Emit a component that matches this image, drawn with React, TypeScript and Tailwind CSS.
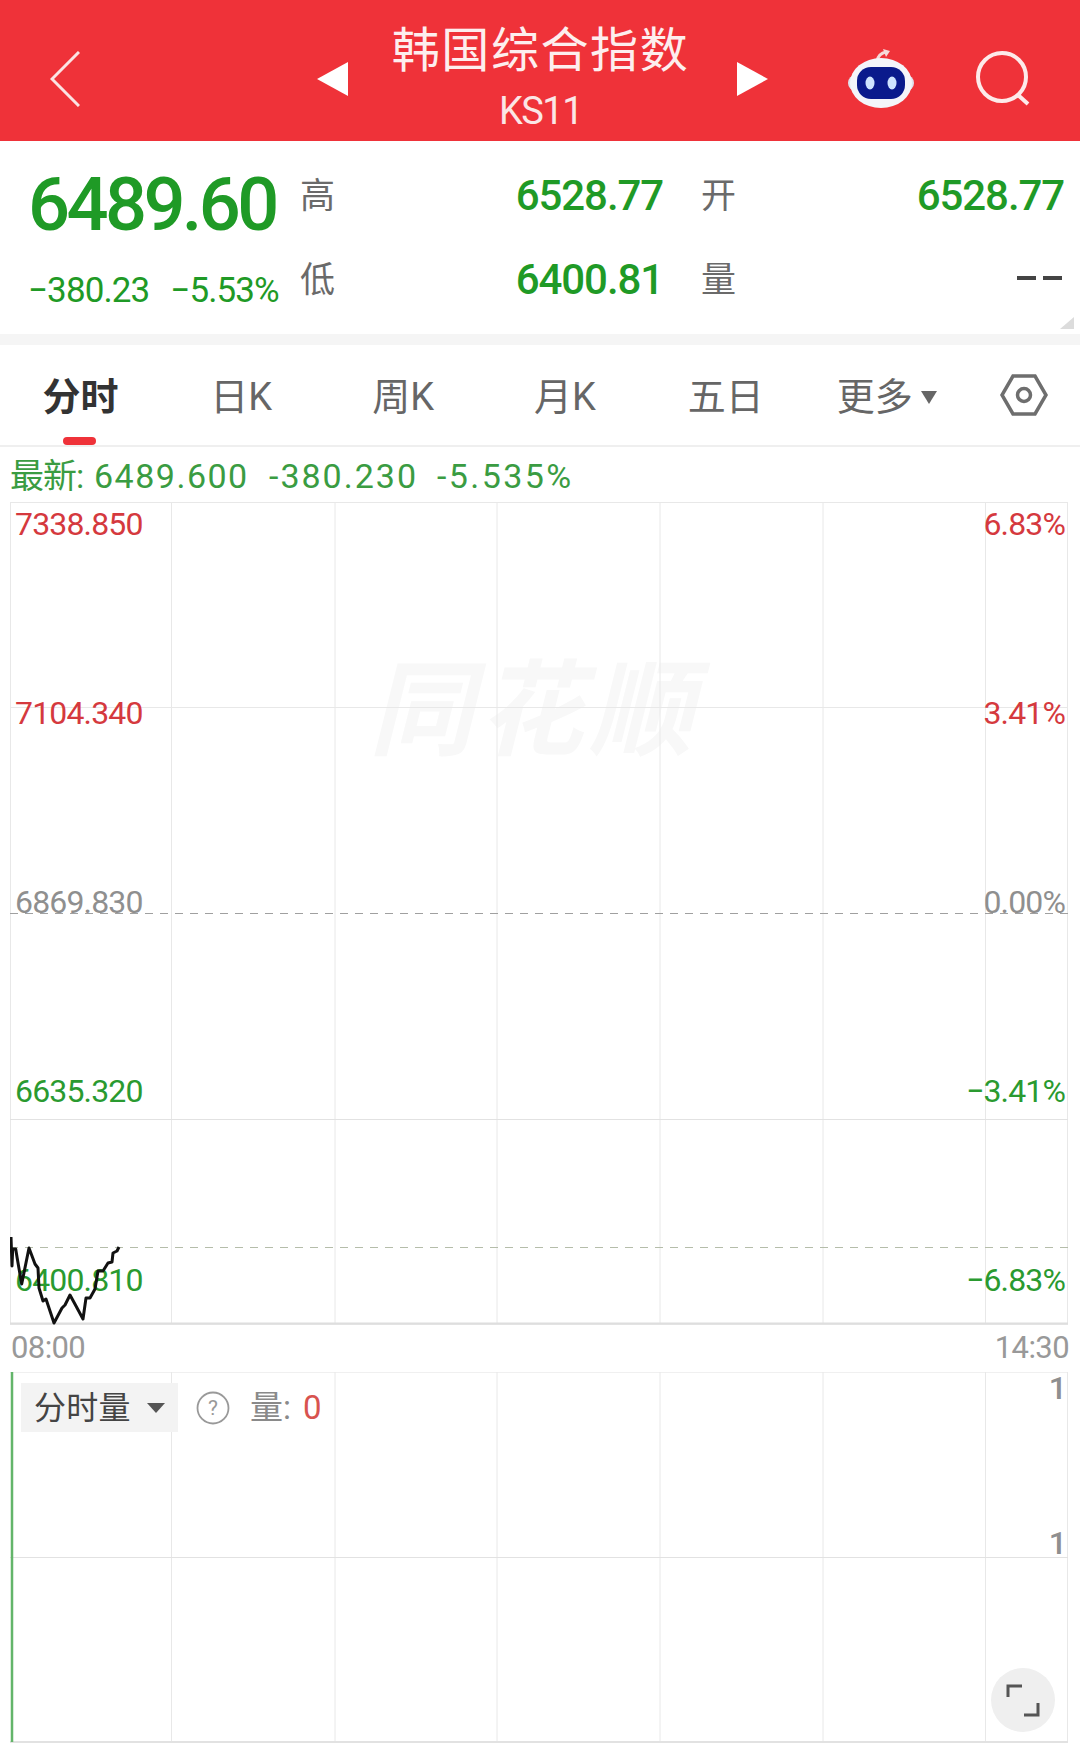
import React from "react";

const GREEN = "text-[#1f9a26]";

const tabs = [
  { label: "日K", width: "w-[161px]" },
  { label: "周K", width: "w-[163px]" },
  { label: "月K", width: "w-[161px]" },
  { label: "五日", width: "w-[161px]" },
];

const priceRows = [
  { left: "7338.850", right: "6.83%", color: "text-[#d5393e]" },
  { left: "7104.340", right: "3.41%", color: "text-[#d5393e]" },
  { left: "6869.830", right: "0.00%", color: "text-[#8f8f8f]" },
  { left: "6635.320", right: "−3.41%", color: "text-[#2a9a30]" },
  { left: "6400.810", right: "−6.83%", color: "text-[#2a9a30]" },
];

const gridX = [161.5, 325, 487, 650, 813, 975.5];

const linePoints =
  "1,64 2,93 2.7,76 5.7,76 7,84 11.7,111 19,75 25,91 28,95 29,115 33,128 36,126 44,150 52,135 55,132 60,122 66,133 73,146 76,125 80,125 85,116 88,98 93,98 98,90 102,89 103,80 107,78 109,74";

function PriceChart() {
  return (
    <svg className="absolute inset-0" width="1060" height="823" fill="none">
      <rect x="0.5" y="0.5" width="1057" height="822" stroke="#e8e8e8" />
      {gridX.map((x) => (
        <line key={x} x1={x} x2={x} y1="0" y2="822" stroke="#e8e8e8" />
      ))}
      <line x1="0" x2="1058" y1="205.5" y2="205.5" stroke="#e8e8e8" />
      <line x1="0" x2="1058" y1="617.5" y2="617.5" stroke="#e2e2e2" />
      <line x1="0" x2="1058" y1="411.5" y2="411.5" stroke="#a0a0a0" strokeDasharray="8 7" />
      <line x1="0" x2="1058" y1="745.5" y2="745.5" stroke="#b5bdaa" strokeDasharray="8 7" />
      <line x1="0" x2="1058" y1="821.5" y2="821.5" stroke="#dedede" strokeWidth="2" />
    </svg>
  );
}

function VolumeChart() {
  return (
    <svg className="absolute inset-0" width="1060" height="371" fill="none">
      <line x1="0" x2="1058" y1="0.5" y2="0.5" stroke="#f0f0f0" />
      <line x1="1057.5" x2="1057.5" y1="0" y2="370" stroke="#e8e8e8" />
      {gridX.map((x) => (
        <line key={x} x1={x} x2={x} y1="0" y2="370" stroke="#e8e8e8" />
      ))}
      <line x1="0" x2="1058" y1="185.5" y2="185.5" stroke="#e2e2e2" />
      <line x1="0" x2="1058" y1="370" y2="370" stroke="#e2e2e2" strokeWidth="2" />
      <line x1="2" x2="2" y1="0" y2="370" stroke="#63b56a" strokeWidth="2.5" />
    </svg>
  );
}

export default function App() {
  return (
    <div className="w-[1080px] h-[1757px] overflow-hidden bg-white font-['Roboto','Noto_Sans_CJK_SC',sans-serif]">
      {/* title bar */}
      <header className="flex items-center h-[141px] bg-[#ef3239] text-white">
        <svg className="ml-[50px] mt-[16px] shrink-0" width="30" height="56" viewBox="0 0 30 56" fill="none">
          <path d="M29 1 2 28l27 27" stroke="#fbe3e3" strokeWidth="3" />
        </svg>
        <svg className="ml-[237px] mt-[16px] shrink-0" width="31" height="34" viewBox="0 0 31 34">
          <path d="M31 0v34L0 17z" fill="#fff" />
        </svg>
        <div className="w-[389px] pr-[4px] text-center shrink-0">
          <div className="text-[48px] leading-[60px] mt-[12px] tracking-[1.6px] text-[#fdeeee]">韩国综合指数</div>
          <div className="text-[38px] leading-[44px] mt-[8px] tracking-[-1.5px] text-[#fbe6e6]">KS11</div>
        </div>
        <svg className="mt-[16px] shrink-0" width="31" height="34" viewBox="0 0 31 34">
          <path d="M0 0v34l31-17z" fill="#fff" />
        </svg>
        <svg className="ml-[79px] mt-[14px] shrink-0" width="68" height="60" viewBox="0 0 68 60" fill="none">
          <path d="M30 13c1-5 4-8 9-9" stroke="#f5d9d9" strokeWidth="3" />
          <path d="M36 1l7 2-4 6z" fill="#f5d9d9" />
          <rect x="1" y="27" width="66" height="16" rx="8" fill="#dfe3ee" />
          <ellipse cx="34" cy="35" rx="31" ry="25" fill="#f4f5fa" />
          <rect x="10" y="19" width="48" height="32" rx="14" fill="#0a1a8c" />
          <ellipse cx="23" cy="35" rx="4.5" ry="6.5" fill="#cfe4ff" />
          <ellipse cx="45" cy="35" rx="4.5" ry="6.5" fill="#cfe4ff" />
        </svg>
        <svg className="ml-[60px] mt-[16px] shrink-0" width="56" height="56" viewBox="0 0 56 56" fill="none">
          <circle cx="27" cy="26" r="24" stroke="#fdeaea" strokeWidth="4" />
          <path d="M43 44l10 9" stroke="#fdeaea" strokeWidth="4" />
        </svg>
      </header>

      {/* quote */}
      <section className="relative flex h-[193px]">
        <div className="w-[300px] pl-[28px] shrink-0">
          <div className={`text-[74px] leading-[80px] mt-[24px] font-medium tracking-[-3.6px] ${GREEN}`}>6489.60</div>
          <div className={`flex gap-[21px] text-[35px] leading-[40px] mt-[26px] tracking-[-0.9px] whitespace-nowrap ${GREEN}`}>
            <span>−380.23</span>
            <span>−5.53%</span>
          </div>
        </div>
        <div className="w-[766px] shrink-0 pt-[12px] text-[#6a6a6a]">
          <div className="flex h-[84px] items-center">
            <span className="text-[35px] w-[39px] shrink-0 pt-[4px]">高</span>
            <span className={`text-[42px] font-medium w-[324px] shrink-0 text-right tracking-[-1.1px] ${GREEN}`}>6528.77</span>
            <span className="text-[35px] ml-[38px] w-[40px] shrink-0 pt-[4px]">开</span>
            <span className={`text-[42px] font-medium w-[323px] shrink-0 text-right tracking-[-1.1px] ${GREEN}`}>6528.77</span>
          </div>
          <div className="flex h-[84px] items-center">
            <span className="text-[35px] w-[39px] shrink-0 pt-[4px]">低</span>
            <span className={`text-[42px] font-medium w-[324px] shrink-0 text-right tracking-[-1.1px] ${GREEN}`}>6400.81</span>
            <span className="text-[35px] ml-[38px] w-[40px] shrink-0 pt-[4px]">量</span>
            <span className="flex w-[321px] shrink-0 justify-end gap-[7px] pb-[2px]">
              <span className="w-[19px] h-[4px] bg-[#444]" />
              <span className="w-[19px] h-[4px] bg-[#444]" />
            </span>
          </div>
        </div>
        <svg className="absolute right-[6px] bottom-[5px]" width="14" height="12" viewBox="0 0 14 12">
          <path d="M14 0v12H0z" fill="#dcdcdc" />
        </svg>
      </section>
      <div className="h-[11px] bg-[#f5f5f5]" />

      {/* period tabs */}
      <nav className="relative flex h-[102px] border-b-[2px] border-[#efefef] items-center text-[38px] text-[#666] pt-[5px]">
        <div className="w-[161px] text-center font-bold text-[#333]">分时</div>
        {tabs.map((t) => (
          <div key={t.label} className={`${t.width} text-center`}>
            {t.label}
          </div>
        ))}
        <div className="flex w-[161px] justify-center items-center gap-[8px]">
          <span>更多</span>
          <svg width="16" height="13" viewBox="0 0 16 13">
            <path d="M0 0h16L8 13z" fill="#666" />
          </svg>
        </div>
        <div className="flex w-[113px] justify-center pb-[5px]">
          <svg width="48" height="42" viewBox="0 0 48 42" fill="none">
            <path d="M13 2h22l11 19-11 19H13L2 21z" stroke="#6e6e6e" strokeWidth="3.5" />
            <circle cx="24" cy="21" r="6.5" stroke="#6e6e6e" strokeWidth="3.5" />
          </svg>
        </div>
        <span className="absolute left-[63px] bottom-[0px] w-[33px] h-[8px] rounded-[4px] bg-[#ef3239]" />
      </nav>

      {/* latest line */}
      <div className="flex h-[55px] items-center pl-[10px] pt-[4px] text-[34px] text-[#3a9c42]">
        <span className="w-[84px] tracking-[-1px] whitespace-nowrap">最新:</span>
        <span className="w-[175px] tracking-[1.5px]">6489.600</span>
        <span className="w-[168px] tracking-[2px]">-380.230</span>
        <span className="tracking-[2.4px]">-5.535%</span>
      </div>

      {/* price chart */}
      <div className="relative ml-[10px] w-[1060px] h-[823px]">
        <div className="absolute left-[133px] top-[135px] w-[340px] text-[104px] leading-[130px] font-bold italic tracking-[6px] text-[#f8f8f8] whitespace-nowrap font-['Noto_Sans_CJK_SC',sans-serif]">
          <span className="ml-[226px]">同花顺</span>
        </div>
        <PriceChart />
        <div className="absolute inset-0 pt-[2px] text-[32px] tracking-[-0.85px]">
          {priceRows.map((r) => (
            <div key={r.left} className={`flex h-[189px] justify-between pl-[5px] pr-[5px] leading-[40px] ${r.color}`}>
              <span>{r.left}</span>
              <span>{r.right}</span>
            </div>
          ))}
        </div>
        <svg className="absolute left-0 top-[671px]" width="120" height="152" fill="none">
          <polyline points={linePoints} stroke="#111" strokeWidth="3" strokeLinejoin="round" />
        </svg>
      </div>

      {/* time axis */}
      <div className="flex h-[47px] items-center justify-between w-[1069px] pl-[11px] text-[31px] tracking-[-0.6px] text-[#999]">
        <span>08:00</span>
        <span>14:30</span>
      </div>

      {/* volume chart */}
      <div className="relative ml-[10px] w-[1060px] h-[371px]">
        <VolumeChart />
        <div className="absolute left-[11px] top-[11px] flex items-center h-[49px] w-[157px] pl-[13px] gap-[16px] bg-[#f3f3f3] text-[32px] text-[#444]">
          <span className="tracking-[0.3px]">分时量</span>
          <svg width="18" height="10" viewBox="0 0 18 10">
            <path d="M0 0h18L9 10z" fill="#555" />
          </svg>
        </div>
        <div className="absolute left-[186px] top-[11px] flex items-center h-[49px] text-[33px] text-[#8a8a8a]">
          <svg width="34" height="34" viewBox="0 0 34 34" fill="none">
            <circle cx="17" cy="17" r="15.5" stroke="#999" strokeWidth="1.8" />
            <text x="17" y="24" textAnchor="middle" fontSize="21" fill="#999">?</text>
          </svg>
          <span className="ml-[20px]">量:</span>
          <span className="ml-[12px] text-[#d8534f]">0</span>
        </div>
        <div className="absolute right-[3px] top-[-2px] text-[32px] leading-[36px] font-medium text-[#8f8f8f]">1</div>
        <div className="absolute right-[3px] top-[153px] text-[32px] leading-[36px] font-medium text-[#8f8f8f]">1</div>
        <button className="absolute left-[981px] top-[296px] flex size-[64px] items-center justify-center rounded-full bg-[#efefef]">
          <svg width="34" height="34" viewBox="0 0 34 34" fill="none">
            <path d="M2 14V3h14" stroke="#555" strokeWidth="3" />
            <path d="M32 20v12H18" stroke="#555" strokeWidth="3" />
          </svg>
        </button>
      </div>
    </div>
  );
}
